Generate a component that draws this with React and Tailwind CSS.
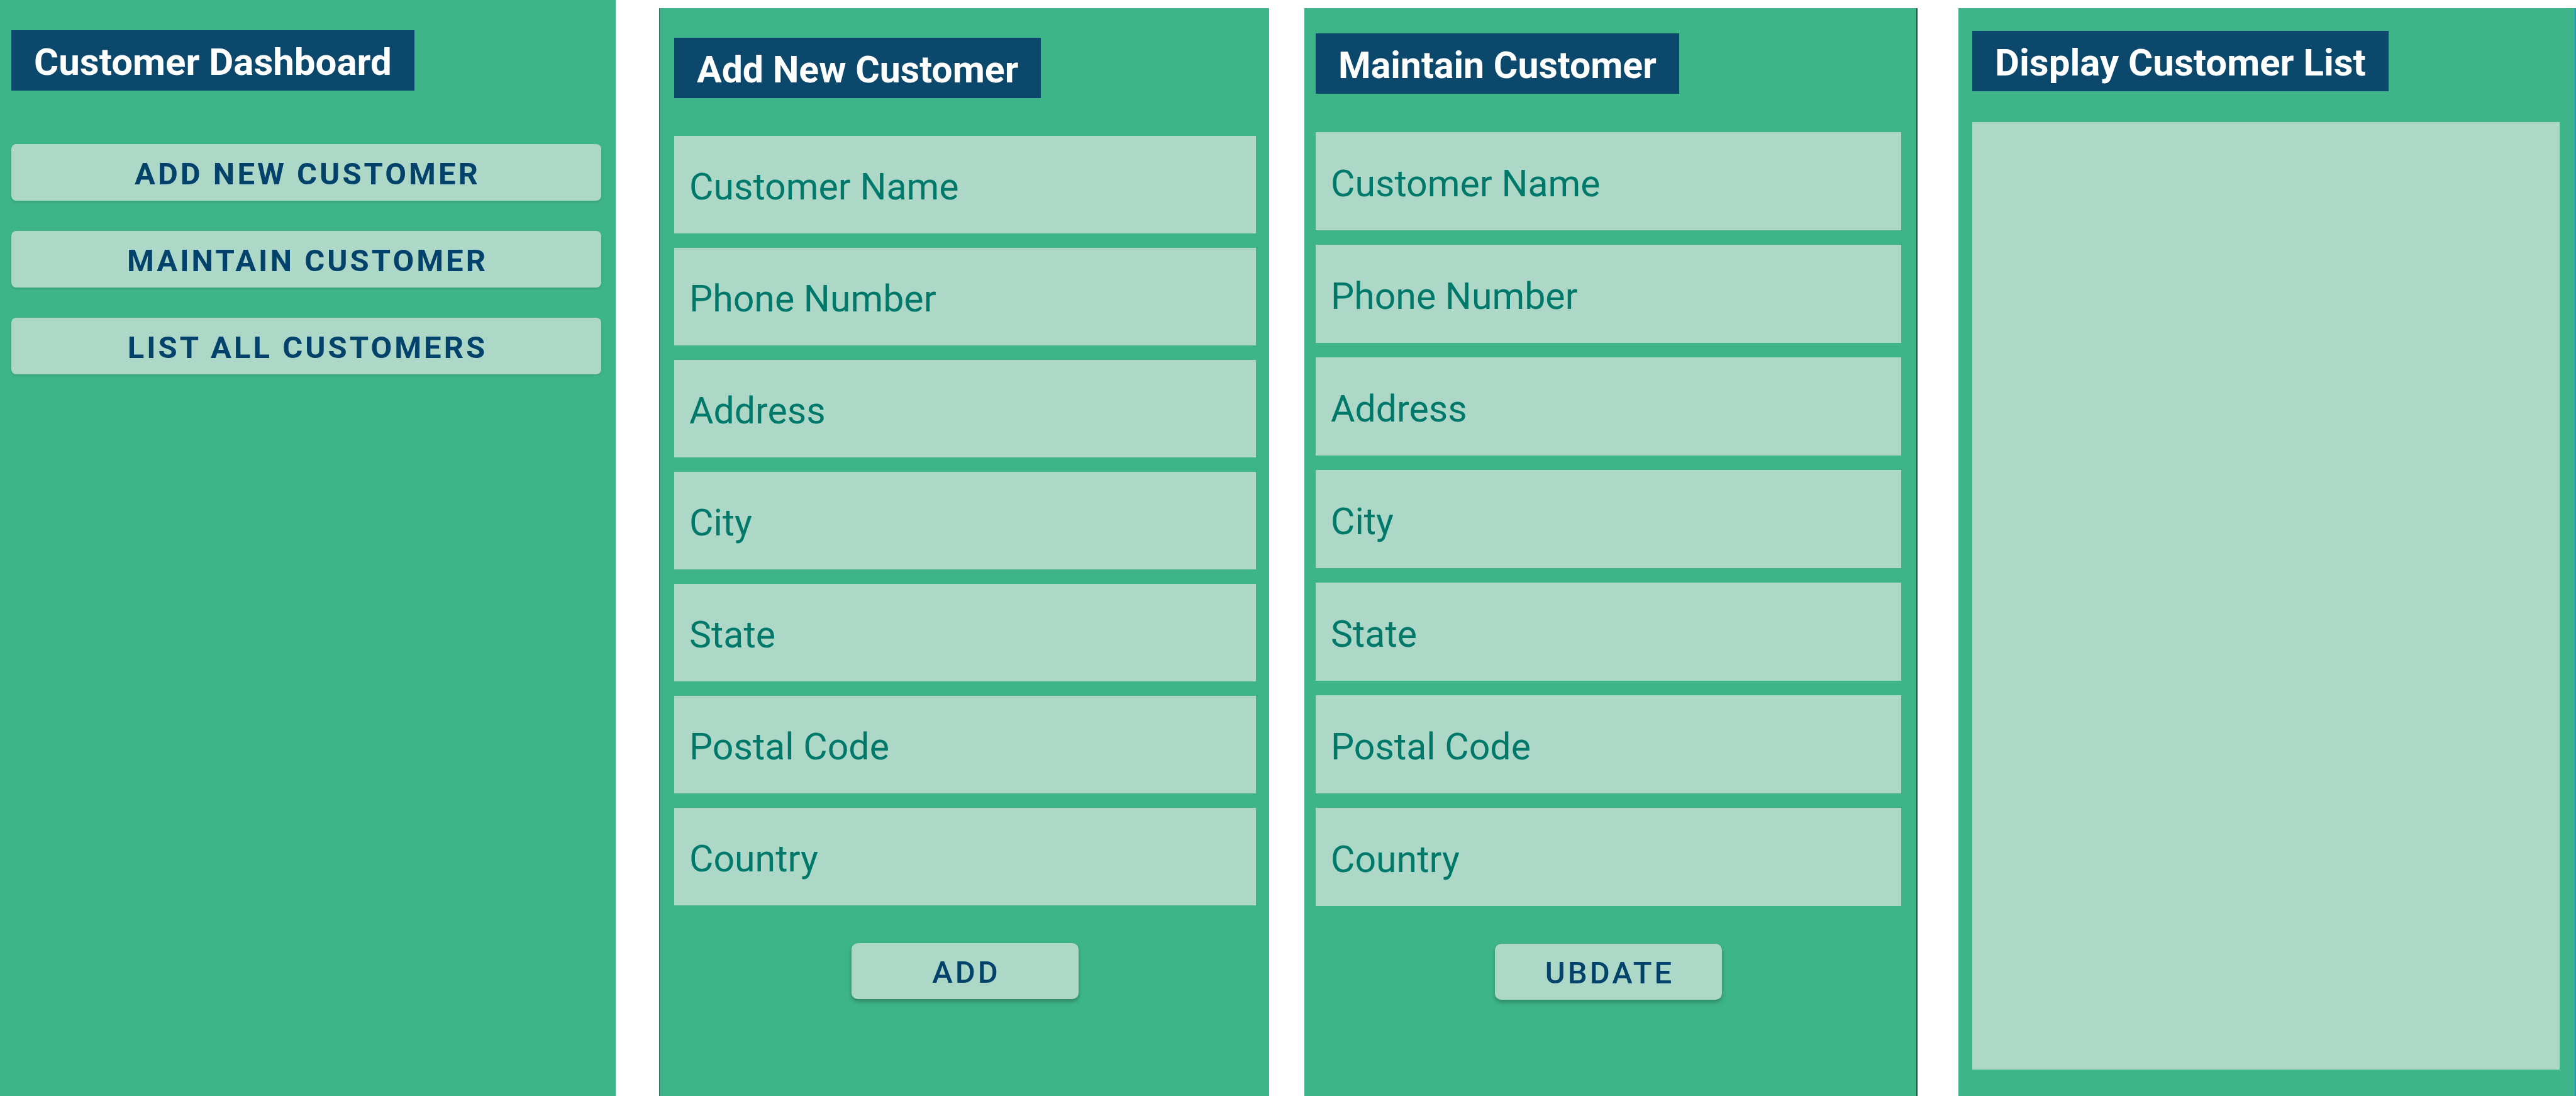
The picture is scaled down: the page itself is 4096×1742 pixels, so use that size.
const FIELDS = [
  "Customer Name",
  "Phone Number",
  "Address",
  "City",
  "State",
  "Postal Code",
  "Country",
];

function Title({ size, children }) {
  return (
    <h1
      className={`self-start bg-[#0b486b] px-9 pt-4 pb-2.5 leading-[70px] font-bold whitespace-nowrap text-white ${size}`}
    >
      {children}
    </h1>
  );
}

function MenuButton({ children }) {
  return (
    <button
      type="button"
      className="h-[90px] rounded-[8px] bg-[#add8c7] pt-1 pl-1 text-[49px] leading-none font-bold tracking-[4px] text-[#03426a] uppercase shadow-[0_2px_4px_rgba(0,0,0,0.12)]"
    >
      {children}
    </button>
  );
}

function CustomerForm({ id, action, fieldHeight }) {
  return (
    <form className="flex flex-col" onSubmit={(e) => e.preventDefault()}>
      <div className="flex flex-col gap-[23px]">
        {FIELDS.map((label) => (
          <input
            key={label}
            type="text"
            name={`${id}-${label}`}
            aria-label={label}
            placeholder={label}
            className={`w-full min-w-0 bg-[#add8c7] pt-1.5 pl-6 text-[59px] text-[#00796b] outline-none placeholder:text-[#00796b] placeholder:opacity-100 ${fieldHeight}`}
          />
        ))}
      </div>
      <button
        type="submit"
        className="mt-[60px] h-[89px] w-[361px] self-center rounded-[10px] bg-[#add8c7] pt-1 pl-1 text-[49px] leading-none font-medium tracking-[4px] text-[#03426a] uppercase shadow-[0_4px_6px_rgba(0,0,0,0.25)]"
      >
        {action}
      </button>
    </form>
  );
}

export default function App() {
  return (
    <main className="grid min-h-screen w-full grid-cols-[979fr_69fr_970fr_56fr_975fr_65fr_982fr] bg-white font-['Roboto',sans-serif]">
      <section className="col-start-1 flex min-w-0 flex-col bg-[#3eb489] pt-12 pr-[23px] pl-[18px]">
        <Title size="text-[60px]">Customer Dashboard</Title>
        <nav className="mt-[85px] flex flex-col gap-12">
          <MenuButton>Add New Customer</MenuButton>
          <MenuButton>Maintain Customer</MenuButton>
          <MenuButton>List All Customers</MenuButton>
        </nav>
      </section>

      <section className="col-start-3 mt-[13px] flex min-w-0 flex-col border-l border-[#2f6d58] bg-[#3eb489] pt-[47px] pr-[21px] pl-[23px]">
        <Title size="text-[59px]">Add New Customer</Title>
        <div className="mt-[60px]">
          <CustomerForm id="add" action="Add" fieldHeight="h-[155px]" />
        </div>
      </section>

      <section className="col-start-5 mt-[13px] flex min-w-0 flex-col border-r-2 border-[#3c4441] bg-[#3eb489] pt-10 pr-6 pl-[18px]">
        <Title size="text-[59px]">Maintain Customer</Title>
        <div className="mt-[61px]">
          <CustomerForm id="maintain" action="Ubdate" fieldHeight="h-[156px]" />
        </div>
      </section>

      <section className="col-start-7 mt-[13px] flex min-w-0 flex-col border-r-2 border-[#2196d0] bg-[#3eb489] pt-9 pr-6 pb-[42px] pl-[22px]">
        <Title size="text-[60px]">Display Customer List</Title>
        <ul aria-label="Customers" className="mt-[49px] flex-1 bg-[#add8c7]" />
      </section>
    </main>
  );
}
